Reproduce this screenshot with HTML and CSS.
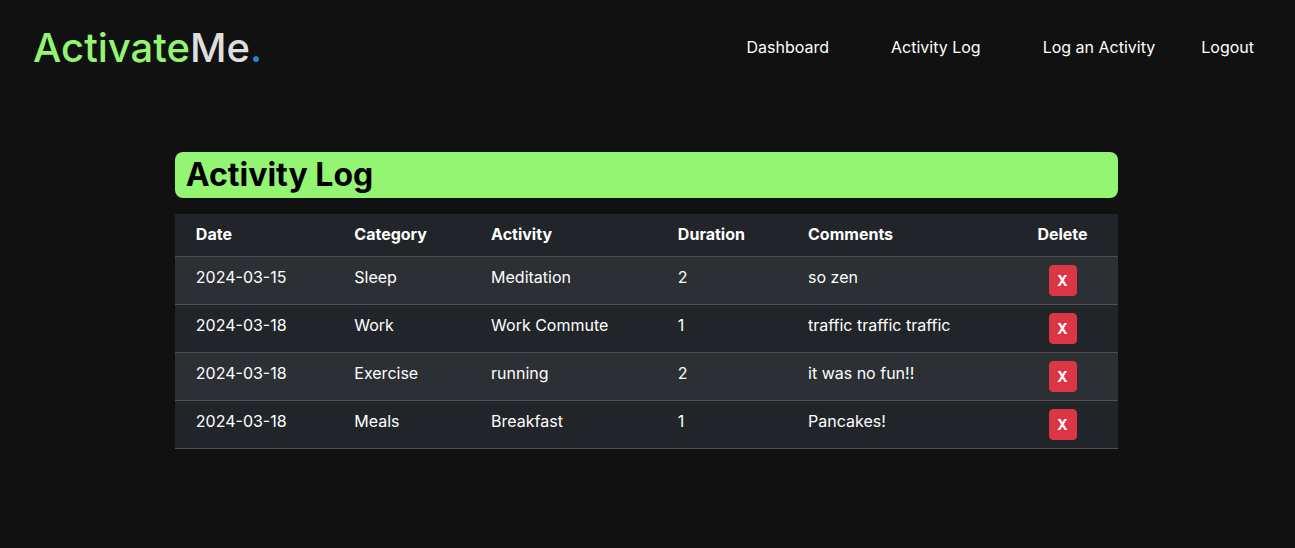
FILE: index.html
```html
<!DOCTYPE html>
<html lang="en">
<head>
<meta charset="utf-8">
<meta name="viewport" content="width=device-width, initial-scale=1">
<title>ActivateMe</title>
<link rel="stylesheet" href="styles.css">
</head>
<body>
<header class="site-header">
  <a class="brand" href="#"><span class="brand-active">Activate</span>Me<span class="brand-dot">.</span></a>
  <nav class="nav">
    <a class="nav-link" href="#">Dashboard</a>
    <a class="nav-link" href="#">Activity Log</a>
    <a class="nav-link" href="#">Log an Activity</a>
    <a class="nav-link nav-logout" href="#">Logout</a>
  </nav>
</header>
<main class="log">
  <h1 class="log-title">Activity Log</h1>
  <table class="log-table">
    <colgroup><col class="col-date"><col class="col-category"><col class="col-activity"><col class="col-duration"><col class="col-comments"><col class="col-delete"></colgroup>
    <thead>
      <tr><th scope="col">Date</th><th scope="col">Category</th><th scope="col">Activity</th><th scope="col">Duration</th><th scope="col">Comments</th><th scope="col" class="cell-delete">Delete</th></tr>
    </thead>
    <tbody>
      <tr><td>2024-03-15</td><td>Sleep</td><td>Meditation</td><td>2</td><td>so zen</td><td class="cell-delete"><button class="delete" type="button">X</button></td></tr>
      <tr><td>2024-03-18</td><td>Work</td><td>Work Commute</td><td>1</td><td>traffic traffic traffic</td><td class="cell-delete"><button class="delete" type="button">X</button></td></tr>
      <tr><td>2024-03-18</td><td>Exercise</td><td>running</td><td>2</td><td>it was no fun!!</td><td class="cell-delete"><button class="delete" type="button">X</button></td></tr>
      <tr><td>2024-03-18</td><td>Meals</td><td>Breakfast</td><td>1</td><td>Pancakes!</td><td class="cell-delete"><button class="delete" type="button">X</button></td></tr>
    </tbody>
  </table>
</main>
</body>
</html>
```
FILE: styles.css
```css
*, *::before, *::after { box-sizing: border-box; }
body {
  margin: 0;
  background: #111111;
  color: #ffffff;
  font-family: Inter, "Liberation Sans", sans-serif;
  font-size: 16px;
  line-height: 24px;
}
.site-header {
  display: flex;
  align-items: center;
  justify-content: space-between;
  padding: 18px 41px 18px 33px;
}
.brand {
  color: #dedede;
  font-size: 40px;
  font-weight: 500;
  line-height: 60px;
  text-decoration: none;
}
.brand-active { color: #93f571; }
.brand-dot { color: #1c8adb; }
.nav { display: flex; gap: 62px; padding-bottom: 2px; }
.nav-link { color: #ffffff; text-decoration: none; }
.nav-logout { margin-left: -16px; }
.log {
  width: 73%;
  margin: 56px auto 0;
  padding-right: 2px;
}
.log-title {
  margin: 0 0 16px;
  padding: 4px 11px;
  border-radius: 8px;
  background: #93f571;
  color: #000000;
  font-size: 32px;
  line-height: 38px;
  font-weight: 700;
}
.log-table {
  width: 100%;
  border-collapse: collapse;
  table-layout: fixed;
  background: #212529;
}
.col-date { width: 16.8%; }
.col-category { width: 14.5%; }
.col-activity { width: 19.8%; }
.col-duration { width: 13.8%; }
.col-comments { width: 23.3%; }
.col-delete { width: 11.8%; }
.log-table th, .log-table td {
  padding: 8px 8px 8px 21px;
  border-bottom: 1px solid #4d5154;
  text-align: left;
  vertical-align: top;
}
.log-table thead th { padding-bottom: 10px; font-weight: 700; }
.log-table .cell-delete { padding-left: 8px; text-align: center; }
.log-table tbody tr:nth-child(odd) { background: #2c3034; }
.delete {
  display: block;
  width: 28px;
  margin: 0 auto;
  padding: 4px 0;
  border: 1px solid #dc3545;
  border-radius: 4px;
  background: #dc3545;
  color: #ffffff;
  font: 700 14px/21px Inter, "Liberation Sans", sans-serif;
  cursor: pointer;
}
```
